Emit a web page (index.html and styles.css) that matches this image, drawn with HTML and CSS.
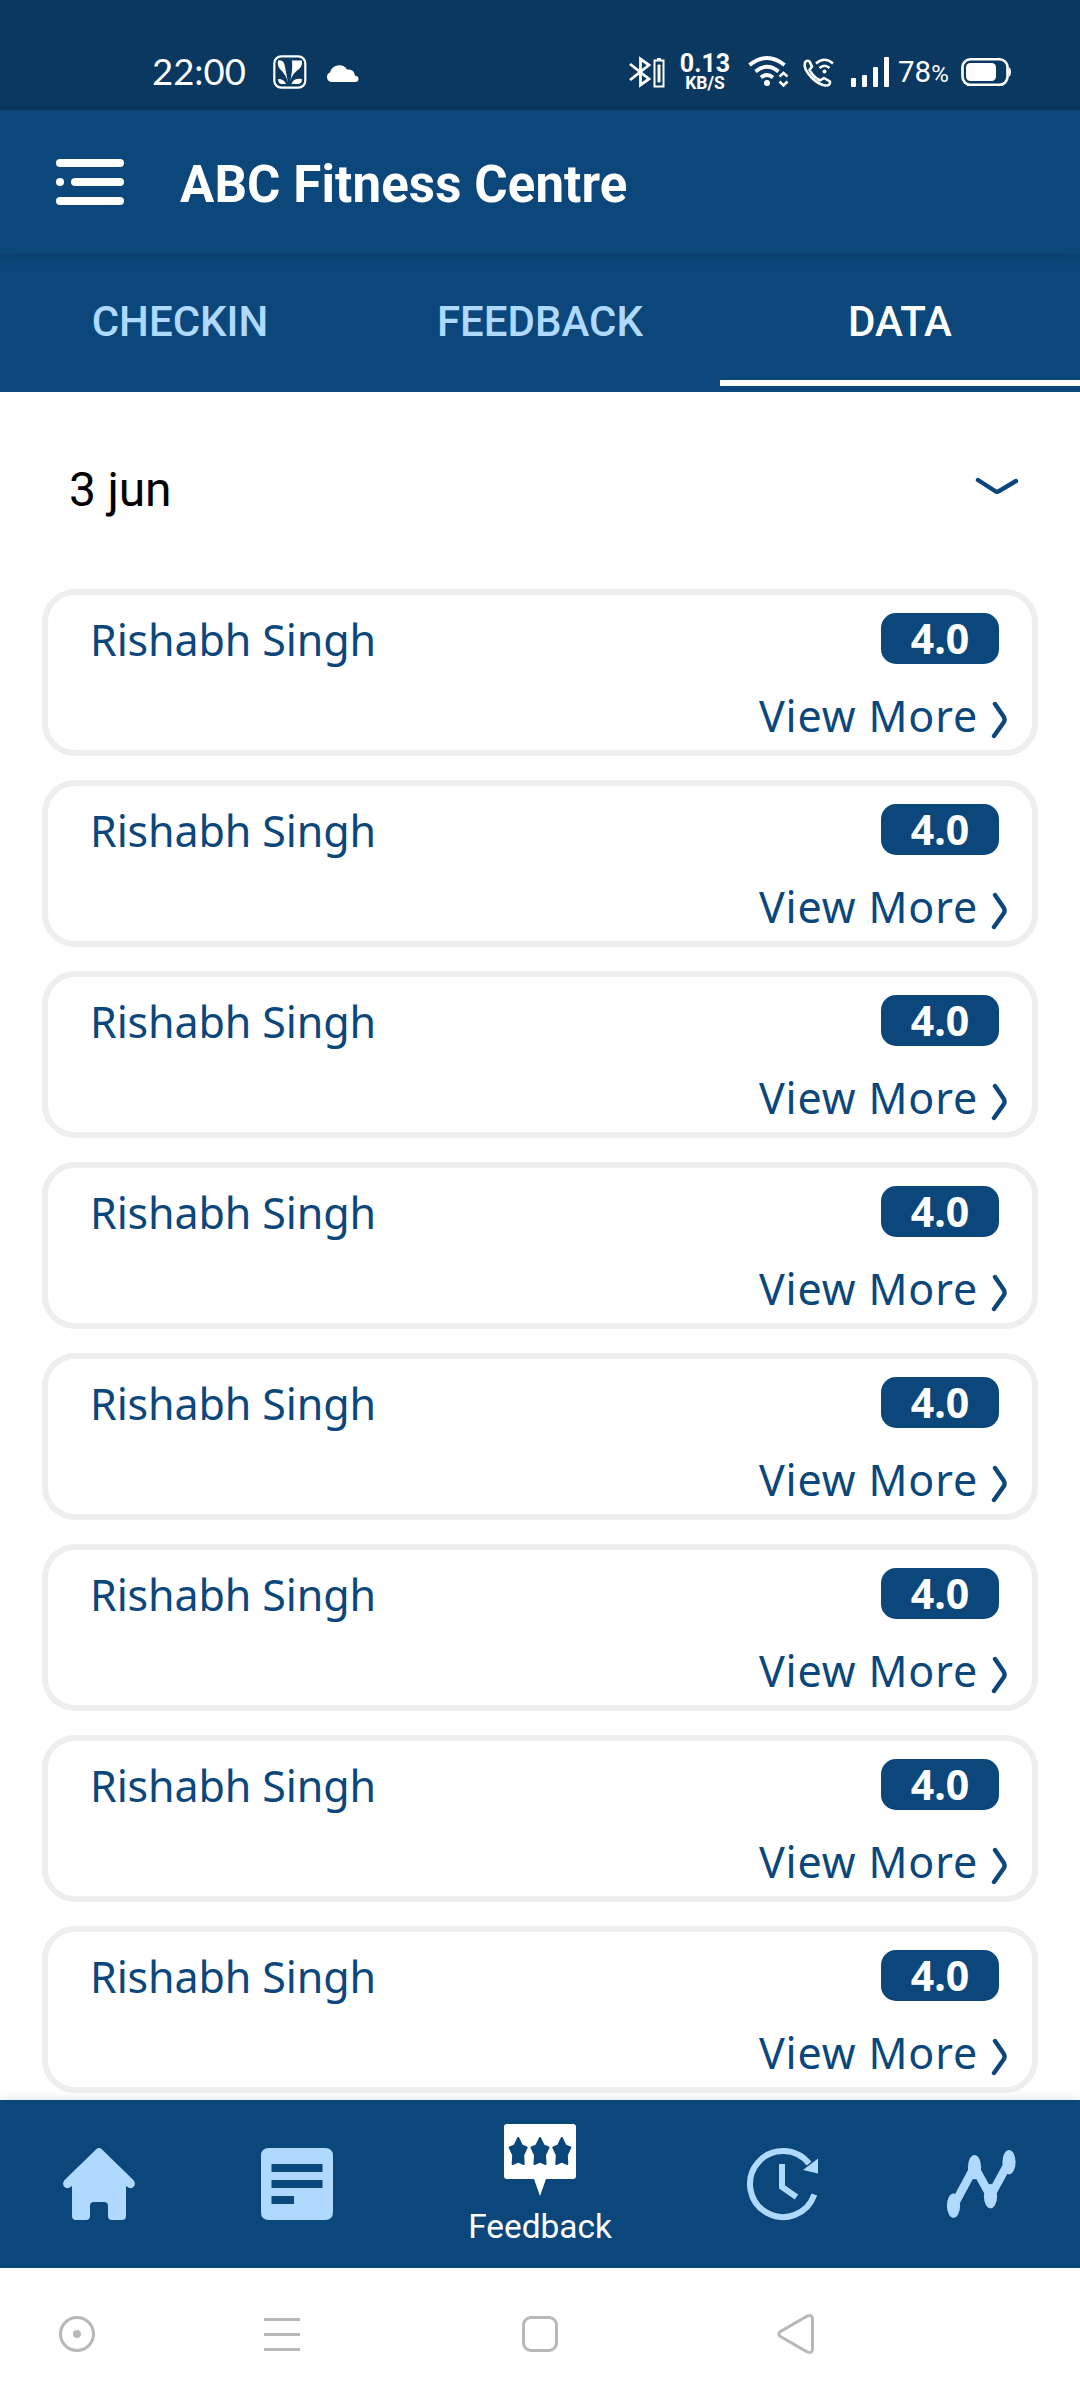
FILE: index.html
```html
<!DOCTYPE html>
<html lang="en">
<head>
<meta charset="utf-8">
<title>ABC Fitness Centre</title>
<link rel="stylesheet" href="styles.css">
</head>
<body>
<svg class="defs" width="0" height="0" aria-hidden="true">
  <symbol id="chevron" viewBox="0 0 18 40"><path d="M4 4 12.6 16.6Q14.6 19.6 12.6 22.6L3 36" fill="none" stroke="currentColor" stroke-width="4.400" stroke-linecap="round"/></symbol>
</svg>
<div class="screen">
  <header class="status">
    <span class="clock">22:00</span>
    <svg class="saavn" width="34" height="34" viewBox="0 0 34 34"><rect x="1.3" y="1.3" width="31" height="31.4" rx="7" fill="none" stroke="#fff" stroke-width="2.2"/><path d="M5 5.5Q11 4 12 12L15.2 28.5Q13.500 20 7 14Q4 11 5 5.500ZM19 5.500H29Q30 12 23 16.500Q18 21 16.800 28.500Q20 14 19 5.500ZM5 24Q11 24 13 29H9Q5 29 5 24ZM29 24Q20 23 18.500 29H25Q29 29 29 24Z" fill="#fff"/></svg>
    <svg class="cloud" width="33" height="19" viewBox="0 0 33 19"><path d="M5 19A5 5 0 0 1 4 9.500 A9.500 9.500 0 0 1 21 6.500Q28 5.500 29 12.500Q32.500 13 32.500 16Q32.500 19 29 19Z" fill="#fff"/></svg>
    <span class="spacer"></span>
    <svg class="bt" width="36" height="32" viewBox="0 0 36 32" fill="none" stroke="#fff" stroke-width="2.800"><path d="M1 8 20 23 11.500 29V3L20 9 1 24"/><path d="M25.500 4.500H34.500V30.500H25.500Z M28 3H32" stroke-width="2"/><path d="M29 9H31V26H29Z" fill="#fff" stroke-width="1"/></svg>
    <span class="speed"><b class="rate">0.13</b><b class="unit">KB/S</b></span>
    <svg class="wifi" width="42" height="32" viewBox="0 0 42 32" fill="none" stroke="#fff" stroke-width="3.800"><path d="M1.500 9Q19 -5 36.500 9M7.500 15.500Q19 6 30.500 15.500M13 21.500Q19 16.500 25 21.500"/><circle cx="19" cy="27" r="3" fill="#fff" stroke="none"/><path d="M31.500 20.500 35.500 17 39.500 20.500M31.500 25.500 35.500 29.500 39.500 25.500" stroke-width="2.500"/></svg>
    <svg class="call" width="32" height="32" viewBox="0 0 32 32" fill="none" stroke="#fff" stroke-width="2.600"><path d="M3 6.500Q5 3.500 7.500 5.500L10 10.500 7.500 14Q11 20.500 18 24.500L22 22 28 25.500Q28.500 30 23 29.500Q16 28 10 22Q1 13 3 6.500Z" stroke-linejoin="round"/><path d="M14 7.500Q22.500 0 31 7.500M17.500 12Q22.500 7.500 27.500 12" stroke-width="2.400"/><circle cx="22.500" cy="15.500" r="2" fill="#fff" stroke="none"/></svg>
    <svg class="bars" width="40" height="31" viewBox="0 0 40 31" fill="#fff"><rect y="21" width="5" height="9" rx="1"/><rect x="11" y="18" width="5" height="12" rx="1"/><rect x="22" y="10" width="5" height="20" rx="1"/><rect x="33" width="5" height="30" rx="1"/></svg>
    <span class="percent">78<small>%</small></span>
    <svg class="battery" width="51" height="30" viewBox="0 0 51 30"><rect x="1.500" y="2.300" width="45" height="25.500" rx="8" fill="none" stroke="#fff" stroke-width="2.600"/><rect x="5" y="6" width="30" height="18" rx="4.500" fill="#fff"/><path d="M47.500 10Q50 11 50 15T47.500 20Z" fill="#fff"/></svg>
  </header>
  <div class="appbar">
    <svg class="menu" width="68" height="48" viewBox="0 0 68 48" fill="#fff"><rect width="68" height="8" rx="4"/><circle cx="4" cy="23" r="4"/><rect x="15" y="19" width="53" height="8" rx="4"/><rect y="38" width="68" height="8" rx="4"/></svg>
    <h1 class="title">ABC Fitness Centre</h1>
  </div>
  <nav class="tabs">
    <span class="tab">CHECKIN</span><span class="tab">FEEDBACK</span><span class="tab active">DATA</span>
  </nav>
  <main class="content">
    <div class="date"><span>3 jun</span><svg width="44" height="20" viewBox="0 0 44 20"><path d="M3 3 20 14Q22 15.500 24 14L41 4" fill="none" stroke="currentColor" stroke-width="4.400" stroke-linecap="round"/></svg></div>
    <section class="list">
      <article class="card"><span class="name">Rishabh Singh</span><span class="score">4.0</span><span class="more"><span>View More</span><svg width="18" height="40"><use href="#chevron"/></svg></span></article>
      <article class="card"><span class="name">Rishabh Singh</span><span class="score">4.0</span><span class="more"><span>View More</span><svg width="18" height="40"><use href="#chevron"/></svg></span></article>
      <article class="card"><span class="name">Rishabh Singh</span><span class="score">4.0</span><span class="more"><span>View More</span><svg width="18" height="40"><use href="#chevron"/></svg></span></article>
      <article class="card"><span class="name">Rishabh Singh</span><span class="score">4.0</span><span class="more"><span>View More</span><svg width="18" height="40"><use href="#chevron"/></svg></span></article>
      <article class="card"><span class="name">Rishabh Singh</span><span class="score">4.0</span><span class="more"><span>View More</span><svg width="18" height="40"><use href="#chevron"/></svg></span></article>
      <article class="card"><span class="name">Rishabh Singh</span><span class="score">4.0</span><span class="more"><span>View More</span><svg width="18" height="40"><use href="#chevron"/></svg></span></article>
      <article class="card"><span class="name">Rishabh Singh</span><span class="score">4.0</span><span class="more"><span>View More</span><svg width="18" height="40"><use href="#chevron"/></svg></span></article>
      <article class="card"><span class="name">Rishabh Singh</span><span class="score">4.0</span><span class="more"><span>View More</span><svg width="18" height="40"><use href="#chevron"/></svg></span></article>
    </section>
  </main>
  <nav class="bottom">
    <span class="item"><svg width="72" height="72" viewBox="0 0 72 72" fill="currentColor"><path d="M33.200 1.200Q36 -1 38.800 1.200L70.600 32.200Q73 35.500 71 38.500Q67.500 42 63 38V68Q63 72 59 72H49Q45 72 45 68V58Q45 54 41 54H31Q27 54 27 58V68Q27 72 23 72H13Q9 72 9 68V38Q4.500 42 1 38.500Q-1 35.500 1.400 32.200Z"/></svg></span>
    <span class="item"><svg width="72" height="72" viewBox="0 0 72 72" fill="currentColor"><path fill-rule="evenodd" d="M8 0H64Q72 0 72 8V64Q72 72 64 72H8Q0 72 0 64V8Q0 0 8 0ZM10.500 16V24H61.500V16ZM10.500 32V40H61.500V32ZM10.500 48V56H33V48Z"/></svg></span>
    <span class="item current"><svg width="72" height="72" viewBox="0 0 72 72"><path d="M3 0H69Q72 0 72 3V52Q72 55 69 55H42L36 72 30 55H3Q0 55 0 52V3Q0 0 3 0Z" fill="#fff"/><g fill="#0c477c" stroke="#0c477c" stroke-width="2" stroke-linejoin="round"><path id="star" d="M14.200 14 17.700 21.300 22.700 23.500 19.200 31 19.700 40 14.200 37.500 8.700 40 9.200 31 5.700 23.500 10.700 21.300Z"/><use href="#star" x="21.800"/><use href="#star" x="43.600"/></g></svg><span class="label">Feedback</span></span>
    <span class="item"><svg width="72" height="72" viewBox="0 0 72 72" fill="none" stroke="currentColor" stroke-width="6"><path d="M62 15.700A33 33 0 1 0 67.300 46.500"/><path d="M56 22 71 10.500V25.500Z" fill="currentColor" stroke="none"/><path d="M35 16V39L49.500 49"/></svg></span>
    <span class="item"><svg width="72" height="72" viewBox="0 0 72 72" fill="currentColor"><path d="M8.500 58 29.500 19 45.500 48 64 14" fill="none" stroke="currentColor" stroke-width="8.500"/><ellipse cx="8.500" cy="57.700" rx="6.600" ry="12.200"/><ellipse cx="29.500" cy="19.200" rx="6.600" ry="12.200"/><ellipse cx="45.500" cy="48.200" rx="6.600" ry="12.200"/><ellipse cx="64" cy="14.200" rx="6.600" ry="12.200"/></svg></span>
  </nav>
  <footer class="system">
    <svg width="36" height="40" viewBox="0 0 36 40"><circle cx="18" cy="20" r="16.500"/><circle cx="18" cy="20" r="4" fill="#b8b8b8" stroke="none"/></svg>
    <svg class="recent" width="36" height="40" viewBox="0 0 36 40"><path d="M0 5.500H36M0 20.500H36M0 35.500H36"/></svg>
    <svg class="square" width="36" height="40" viewBox="0 0 36 40"><rect x="1.500" y="3.500" width="33" height="33" rx="7.500"/></svg>
    <svg class="back" width="38" height="40" viewBox="0 0 38 40"><path d="M3.500 17.500 30 2.200Q35.500 0 35.500 5V35Q35.500 40 30 37.800L3.500 22.500Q0 20 3.500 17.500Z"/></svg>
  </footer>
</div>
</body>
</html>
```
FILE: styles.css
```css
* { box-sizing: border-box; }
body { margin: 0; background: #fff; font-family: Roboto, sans-serif; }
svg { display: block; flex: none; overflow: visible; }
.defs { position: absolute; }
.screen { width: 1080px; height: 2400px; display: flex; flex-direction: column; overflow: hidden; }

.status { height: 110px; flex: none; display: flex; align-items: center; padding: 34px 68px 0 152px; background: #0a3861; color: #fff; line-height: 1; }
.clock { width: 94px; padding-bottom: 2px; font: 400 36.5px/1 Lato, sans-serif; white-space: nowrap; }
.saavn { margin-left: 27px; }
.cloud { margin-left: 19px; }
.spacer { flex: 1; }
.speed { width: 50px; margin-left: 15px; display: flex; flex-direction: column; align-items: center; }
.rate { font-size: 25px; line-height: 22px; }
.unit { font-size: 17.5px; line-height: 17px; }
.wifi { margin-left: 18px; }
.call { margin-left: 12px; }
.bars { margin-left: 17px; }
.percent { width: 54px; margin-left: 7px; padding-top: 1px; font-size: 29.5px; font-weight: 400; white-space: nowrap; }
.percent small { font-size: 24px; }
.battery { margin-left: 9px; }

.appbar { height: 144px; flex: none; display: flex; align-items: center; padding: 2px 56px 0; gap: 56px; background: #0c477c; position: relative; box-shadow: 0 2px 10px rgba(0, 0, 0, .16); z-index: 1; }
.title { margin: 0; padding-top: 4px; color: #fff; font-size: 51px; line-height: 60px; font-weight: 700; letter-spacing: .12px; white-space: nowrap; }

.tabs { height: 138px; flex: none; display: grid; grid-template-columns: repeat(3, 1fr); padding-bottom: 6px; background: #0c477c; color: #afd9ff; }
.tab { display: flex; align-items: center; justify-content: center; border-bottom: 6px solid transparent; padding-top: 8px; font-size: 42px; font-weight: 500; }
.tab.active { color: #fff; border-color: #fff; }

.content { height: 1708px; flex: none; overflow: hidden; }
.date { height: 197px; display: flex; align-items: center; justify-content: space-between; padding: 0 61px 0 69px; font-size: 48px; color: #000; }
.date span { margin-top: -2px; letter-spacing: -.2px; }
.date svg { color: #0c477c; margin-top: -8px; }
.list { display: flex; flex-direction: column; gap: 24px; padding: 0 42px; }
.card { height: 167px; flex: none; display: grid; grid-template: 81px 68px / 1fr auto; padding: 0 23px 0 42px; border: 6px solid #eee; border-radius: 33px; color: #0c477c; font-family: "Noto Sans", sans-serif; }
.name { font-size: 43px; line-height: 60px; margin-top: 15px; letter-spacing: -.12px; white-space: nowrap; }
.score { justify-self: end; width: 118px; height: 51px; margin: 18px 10px 0 0; border-radius: 15px; background: #0c477c; color: #fff; font-size: 41px; line-height: 51px; font-weight: 700; text-align: center; }
.more { grid-column: 1 / 3; display: flex; justify-content: flex-end; align-items: flex-start; gap: 13px; font-size: 43px; line-height: 60px; letter-spacing: .85px; white-space: nowrap; }
.more span { margin-top: 10px; }
.more svg { margin-top: 24px; }

.bottom { height: 168px; flex: none; display: grid; grid-template-columns: 198px 198px 288px 198px 198px; background: #0c477c; color: #afd9ff; position: relative; box-shadow: 0 0 12px rgba(0, 0, 0, .12); }
.item { display: flex; flex-direction: column; align-items: center; padding-top: 48px; }
.item.current { padding-top: 24px; color: #fff; }
.label { margin-top: 11px; font-size: 33.4px; line-height: 40px; }

.system { height: 132px; flex: none; display: flex; align-items: center; padding-left: 59px; background: #fff; position: relative; }
.system svg { fill: none; stroke: #b8b8b8; stroke-width: 3; }
.recent { margin-left: 169px; }
.square { margin-left: 222px; }
.back { margin-left: 219px; }
```
